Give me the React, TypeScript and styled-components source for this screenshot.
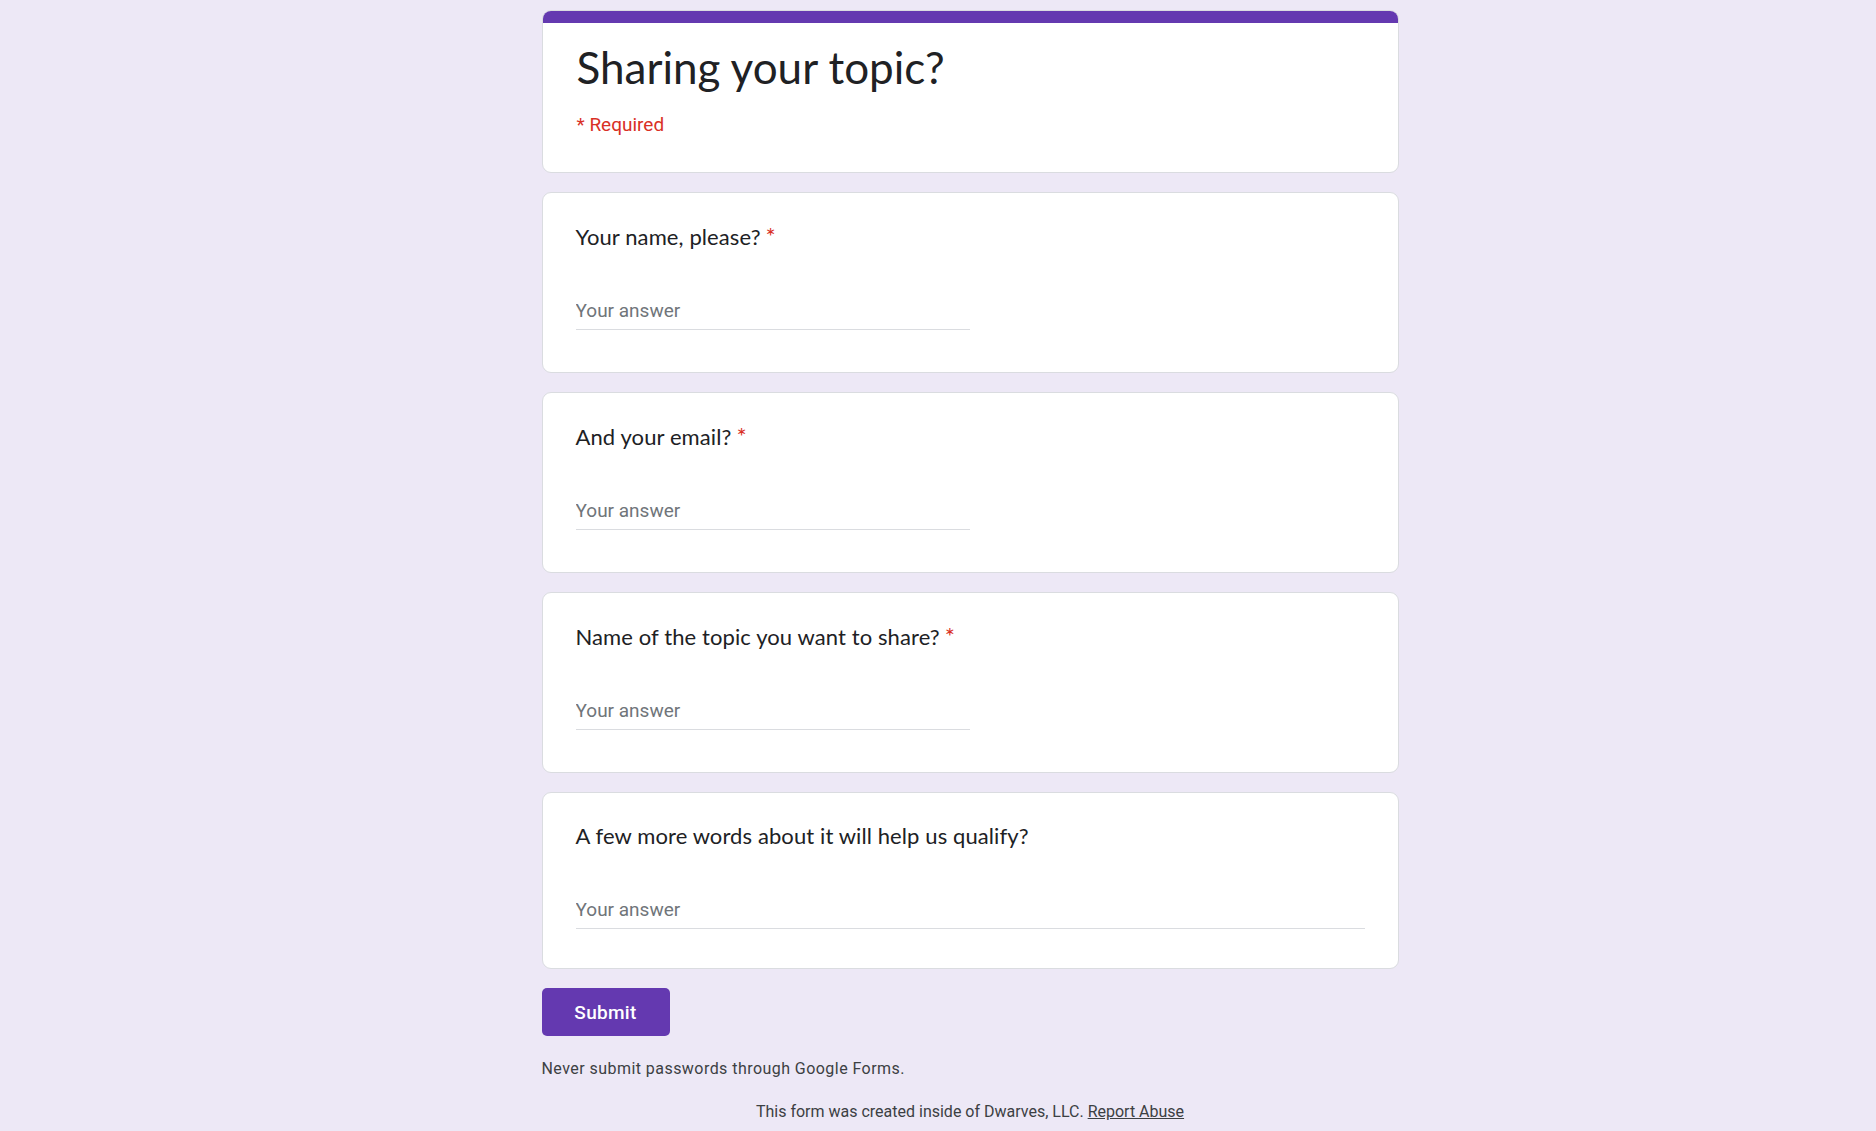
import React from "react";
import styled, { createGlobalStyle } from "styled-components";

const Global = createGlobalStyle`
  html, body { margin: 0; padding: 0; background: #ede8f6; }
  body { font-family: Roboto, "Liberation Sans", sans-serif; }
`;

const Page = styled.div`
  min-height: 1131px;
  background: #ede8f6;
  display: flex;
  justify-content: center;
  padding: 10px 0 0 64px;
  box-sizing: border-box;
`;

const Column = styled.div`
  width: 857px;
  display: flex;
  flex-direction: column;
  gap: 19px;
`;

const Card = styled.div<{ $header?: boolean; $compact?: boolean }>`
  background: #fff;
  border: 1px solid #dadce0;
  border-radius: 9px;
  overflow: hidden;
  box-sizing: border-box;
  height: ${(p) => (p.$header ? "163px" : p.$compact ? "177px" : "181px")};
  display: flex;
  flex-direction: column;
`;

const TopBar = styled.div`
  height: 13px;
  background: #6439b0;
  margin: -1px -1px 0;
`;

const CardBody = styled.div<{ $header?: boolean }>`
  padding: ${(p) => (p.$header ? "16px 34px 0" : "29px 33px 0")};
  display: flex;
  flex-direction: column;
`;

const Title = styled.h1`
  margin: 0;
  font-family: Lato, "Open Sans", sans-serif;
  font-weight: 400;
  font-size: 44px;
  line-height: 56px;
  color: #202124;
`;

const RequiredNote = styled.div`
  margin-top: 18px;
  font-family: Roboto, sans-serif;
  font-size: 19px;
  line-height: 24px;
  color: #d93025;
`;

const Question = styled.div`
  font-family: Lato, "Open Sans", sans-serif;
  font-size: 22px;
  line-height: 28px;
  color: #202124;
  letter-spacing: 0.1px;
`;

const Star = styled.span`
  color: #d93025;
  margin-left: 5px;
  font-size: 24px;
`;

const Answer = styled.input<{ $full?: boolean }>`
  margin-top: 48px;
  width: ${(p) => (p.$full ? "100%" : "50%")};
  box-sizing: border-box;
  border: none;
  border-bottom: 1px solid #dadce0;
  outline: none;
  padding: 0 0 6px;
  font-family: Roboto, sans-serif;
  font-size: 19px;
  line-height: 24px;
  color: #202124;
  background: transparent;
  &::placeholder { color: #70757a; }
`;

const SubmitRow = styled.div`
  display: flex;
`;

const SubmitButton = styled.button`
  width: 128px;
  height: 48px;
  border: none;
  border-radius: 5px;
  background: #6439b0;
  color: #fff;
  font-family: Roboto, sans-serif;
  font-weight: 500;
  font-size: 19px;
  letter-spacing: 0.3px;
  cursor: pointer;
`;

const Warning = styled.div`
  margin-top: 4px;
  font-family: Roboto, sans-serif;
  font-size: 16px;
  line-height: 20px;
  color: #3c4043;
  letter-spacing: 0.45px;
`;

const Footer = styled.div`
  margin-top: 4px;
  text-align: center;
  font-family: Roboto, sans-serif;
  font-size: 16px;
  line-height: 20px;
  color: #3c4043;
  letter-spacing: 0;
`;

const AbuseLink = styled.a`
  color: #3c4043;
  text-decoration: underline;
`;

const questions = [
  { q: "Your name, please?", req: true, full: false },
  { q: "And your email?", req: true, full: false },
  { q: "Name of the topic you want to share?", req: true, full: false },
  { q: "A few more words about it will help us qualify?", req: false, full: true },
];

export default function App() {
  return (
    <>
      <Global />
      <Page>
        <Column>
          <Card $header>
            <TopBar />
            <CardBody $header>
              <Title>Sharing your topic?</Title>
              <RequiredNote>* Required</RequiredNote>
            </CardBody>
          </Card>
          {questions.map((item) => (
            <Card key={item.q} $compact={item.full}>
              <CardBody>
                <Question>
                  {item.q}
                  {item.req && <Star>*</Star>}
                </Question>
                <Answer $full={item.full} placeholder="Your answer" />
              </CardBody>
            </Card>
          ))}
          <SubmitRow>
            <SubmitButton>Submit</SubmitButton>
          </SubmitRow>
          <Warning>Never submit passwords through Google Forms.</Warning>
          <Footer>
            This form was created inside of Dwarves, LLC.{" "}
            <AbuseLink href="#">Report Abuse</AbuseLink>
          </Footer>
        </Column>
      </Page>
    </>
  );
}
